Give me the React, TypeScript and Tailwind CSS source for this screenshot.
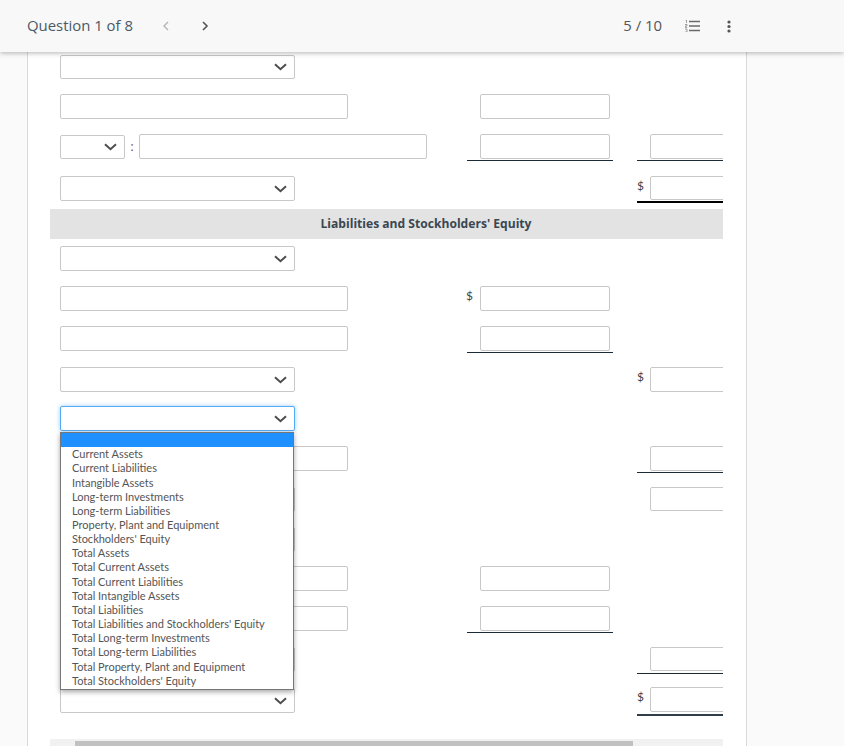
import React from 'react';

const options = [
  'Current Assets',
  'Current Liabilities',
  'Intangible Assets',
  'Long-term Investments',
  'Long-term Liabilities',
  'Property, Plant and Equipment',
  "Stockholders' Equity",
  'Total Assets',
  'Total Current Assets',
  'Total Current Liabilities',
  'Total Intangible Assets',
  'Total Liabilities',
  "Total Liabilities and Stockholders' Equity",
  'Total Long-term Investments',
  'Total Long-term Liabilities',
  'Total Property, Plant and Equipment',
  "Total Stockholders' Equity",
];

const Select = ({ className = 'w-[235px] h-[25px] border-[#c8c8c8]' }: { className?: string }) => (
  <div className="relative shrink-0">
    <select className={`appearance-none block bg-white border rounded-[2px] ${className}`} />
    <svg
      className="absolute right-[8px] top-1/2 -translate-y-1/2 pointer-events-none"
      width="13"
      height="8"
      viewBox="0 0 13 8"
      fill="none"
      stroke="#4d4d4d"
      strokeWidth="2"
    >
      <path d="M1 1.2l5.5 5 5.5-5" />
    </svg>
  </div>
);

const TextInput = ({ className = 'h-[25px]' }: { className?: string }) => (
  <input type="text" className={`block shrink-0 bg-white border border-[#c8c8c8] rounded-[2px] ${className}`} />
);

const Dollar = ({ className = '' }: { className?: string }) => (
  <span className={`shrink-0 text-[12px] leading-[20px] text-[#444] font-['Lato',sans-serif] ${className}`}>$</span>
);

// 中央の列
const MidCell = ({ dollar, line }: { dollar?: boolean; line?: boolean }) => (
  <div className={`flex w-[146px] ${line ? 'border-b border-[#1c2b36] h-[27px]' : 'h-[25px]'}`}>
    {dollar ? <Dollar className="w-[14px] -ml-[1px]" /> : <div className="w-[13px] shrink-0" />}
    <TextInput className="w-[130px] h-[25px]" />
  </div>
);

// 右の列（右端で切れる）
const RightCell = ({ dollar, cell = '', input = 'h-[25px]' }: { dollar?: boolean; cell?: string; input?: string }) => (
  <div className={`flex w-[86px] overflow-hidden ${cell}`}>
    {dollar ? <Dollar className="w-[13px]" /> : <div className="w-[13px] shrink-0" />}
    <TextInput className={`w-[90px] ${input}`} />
  </div>
);

const Row = ({ top, left, mid, right }: { top: string; left: React.ReactNode; mid?: React.ReactNode; right?: React.ReactNode }) => (
  <div className={`flex items-start h-[25px] shrink-0 ${top}`}>
    <div className="w-[417px] pl-[10px] flex items-center shrink-0">{left}</div>
    <div className="w-[146px] shrink-0">{mid}</div>
    <div className="w-[24px] shrink-0" />
    <div className="w-[86px] shrink-0">{right}</div>
  </div>
);

const wide = <TextInput className="w-[288px] h-[25px]" />;
const single = 'border-b border-[#1c2b36] h-[27px]';

const App = () => {
  return (
    <div className="relative h-[747px] w-[844px] overflow-hidden bg-white font-['Open_Sans',sans-serif]">
      <div className="h-[746px] flex flex-col bg-[#fafafa]">
        {/* ヘッダー */}
        <div className="relative z-10 h-[52px] shrink-0 flex items-center bg-[#f8f8f8] shadow-[0_1px_5px_rgba(0,0,0,0.3)] text-[#4a5a66]">
          <span className="ml-[27px] pb-[2px] text-[14.9px]">Question 1 of 8</span>
          <svg className="ml-[29px]" width="8" height="10" viewBox="0 0 8 10" fill="none" stroke="#b5b5b5" strokeWidth="1.4">
            <path d="M6 1 2 5l4 4" />
          </svg>
          <svg className="ml-[31px]" width="8" height="10" viewBox="0 0 8 10" fill="none" stroke="#555" strokeWidth="1.6">
            <path d="M2 1l4 4-4 4" />
          </svg>
          <span className="ml-auto pb-[2px] text-[14.9px] text-[#555]">5 / 10</span>
          <svg className="ml-[23px]" width="15" height="12" viewBox="0 0 15 12" fill="none" stroke="#6a6a6a">
            <path d="M4 1.5H15M4 6H15M4 10.5H15" strokeWidth="1.3" />
            <path d="M.5 0h1v3M0 4.5h2V6H.4v1.5h1.8M0 9h2v3H0" strokeWidth=".6" />
          </svg>
          <svg className="ml-[27px] mr-[113px]" width="4" height="13" viewBox="0 0 4 13" fill="#555">
            <circle cx="2" cy="2" r="1.6" />
            <circle cx="2" cy="6.5" r="1.6" />
            <circle cx="2" cy="11" r="1.6" />
          </svg>
        </div>

        {/* カード */}
        <div className="flex-1 min-h-0">
          <div className="ml-[27px] w-[720px] h-full border-x border-[#d9d9d9] bg-white pl-[22px] pt-[3px]">
            <div className="w-[673px] h-full flex flex-col">
              <Row top="" left={<Select className="w-[235px] h-[24px] border-[#c8c8c8]" />} />
              <Row top="mt-[14px]" left={wide} mid={<MidCell />} />
              <Row
                top="mt-[15px]"
                left={
                  <>
                    <Select className="w-[65px] h-[24px] border-[#c8c8c8]" />
                    <span className="w-[14px] text-center text-[12px] text-[#7a3b2e] leading-[25px]">:</span>
                    <TextInput className="w-[288px] h-[25px]" />
                  </>
                }
                mid={<MidCell line />}
                right={<RightCell cell={single} />}
              />
              <Row top="mt-[17px]" left={<Select />} right={<RightCell dollar cell="border-b-[2px] border-[#000] h-[27px]" input="h-[24px]" />} />

              <div className="mt-[8px] h-[30px] bg-[#e3e3e3] shrink-0 flex items-center justify-center pl-[79px] text-[12.1px] font-bold text-[#3a4750]">
                Liabilities and Stockholders' Equity
              </div>

              <Row top="mt-[7px]" left={<Select />} />
              <Row top="mt-[15px]" left={wide} mid={<MidCell dollar />} />
              <Row top="mt-[15px]" left={wide} mid={<MidCell line />} />
              <Row top="mt-[16px]" left={<Select />} right={<RightCell dollar />} />
              <Row top="mt-[14px]" left={<Select className="w-[235px] h-[25px] border-[#55aaf5] shadow-[0_0_4px_rgba(85,170,245,0.6)]" />} />
              <Row top="mt-[15px]" left={wide} right={<RightCell cell={single} />} />
              <Row top="mt-[16px]" left={<Select />} right={<RightCell input="h-[24px]" />} />
              <Row top="mt-[15px]" left={<Select />} />
              <Row top="mt-[14px]" left={wide} mid={<MidCell />} />
              <Row top="mt-[15px]" left={wide} mid={<MidCell line />} />
              <Row top="mt-[16px]" left={<Select />} right={<RightCell cell={single} input="h-[24px]" />} />
              <Row top="mt-[16px]" left={<Select />} right={<RightCell dollar cell="-mt-[1px] border-b-[2px] border-[#2f3e48] h-[29px]" />} />

              {/* 横スクロールバー */}
              <div className="mt-[26px] h-[7px] bg-[#f1f1f1] pl-[25px] pt-[2px] shrink-0">
                <div className="w-[558px] h-full bg-[#c1c1c1]" />
              </div>
            </div>
          </div>
        </div>
      </div>

      {/* 開いたドロップダウン */}
      <div className="absolute left-[60px] top-[432px] w-[234px] h-[258px] bg-white border border-[#767676] shadow-[0_2px_5px_rgba(0,0,0,0.35)] font-['Lato',sans-serif] text-[11px] leading-[14.15px] text-[#555]">
        <div className="h-[14px] bg-[#1e90ff]" />
        <div className="pt-[0.2px]">
          {options.map((o) => (
            <div key={o} className="pl-[11px] whitespace-nowrap">
              {o}
            </div>
          ))}
        </div>
      </div>
    </div>
  );
};

export default App;
